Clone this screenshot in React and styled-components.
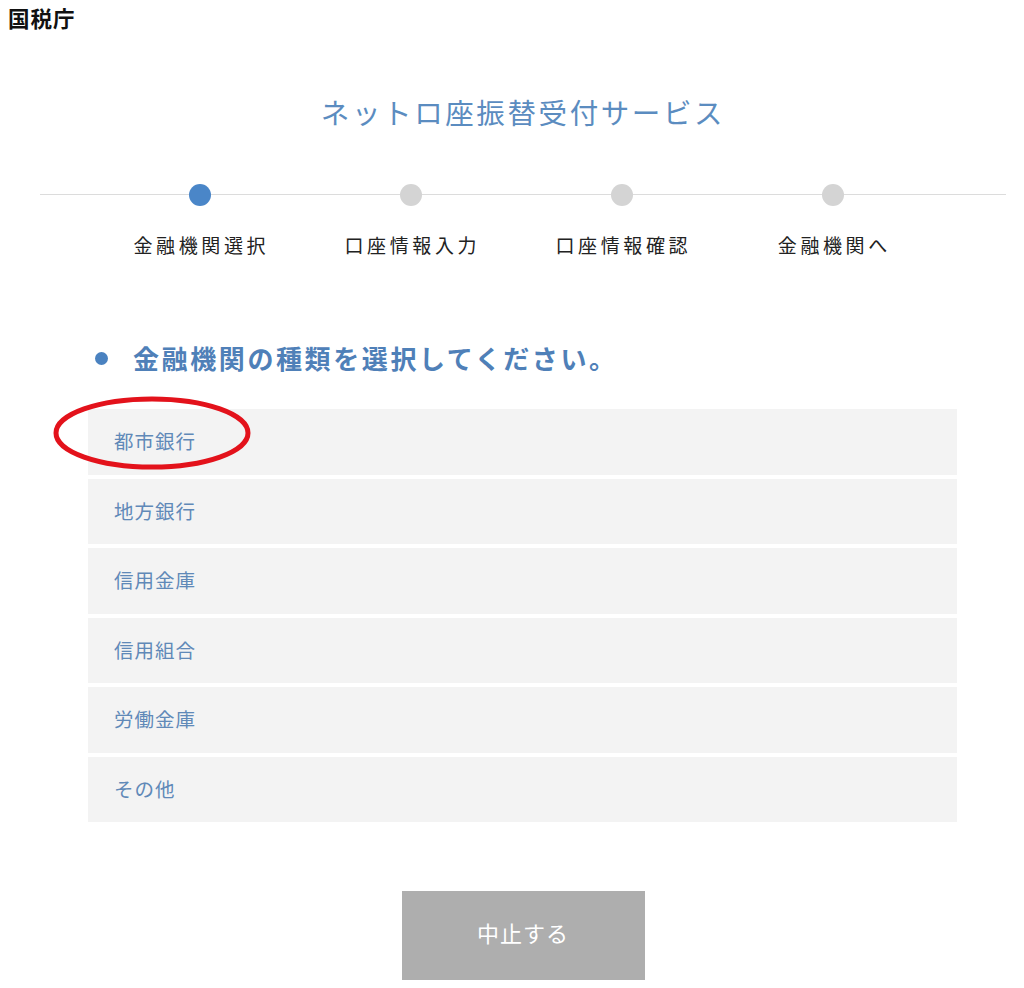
import React from "react";
import styled, { createGlobalStyle } from "styled-components";

const Global = createGlobalStyle`
  html, body { margin: 0; padding: 0; background: #fff; }
  body { font-family: "Noto Sans CJK JP", "Noto Sans", sans-serif; }
`;

const Header = styled.header`
  padding: 5px 8px;
  font-size: 21.5px;
  line-height: 26px;
  font-weight: 700;
  color: #111;
  letter-spacing: 1px;
`;

const Main = styled.main`
  width: 966px;
  margin-left: 40px;
  display: flex;
  flex-direction: column;
`;

const Title = styled.h1`
  margin: 56px 0 0;
  text-align: center;
  font-size: 28.5px;
  line-height: 40px;
  font-weight: 400;
  letter-spacing: 2.6px;
  color: #5b8cc0;
`;

const Stepper = styled.ol`
  list-style: none;
  margin: 52px 0 0;
  padding: 0 0 0 54px;
  display: grid;
  grid-template-columns: repeat(4, 211px);
  position: relative;
  &::before {
    content: "";
    position: absolute;
    left: 0;
    right: 0;
    top: 10px;
    height: 1px;
    background: #dcdcdc;
  }
`;

const Step = styled.li`
  display: flex;
  flex-direction: column;
  align-items: center;
  position: relative;
`;

const Dot = styled.span`
  width: 22px;
  height: 22px;
  border-radius: 50%;
  background: ${(p) => (p.$active ? "#4a86c8" : "#d4d4d4")};
`;

const StepLabel = styled.span`
  margin-top: 27px;
  font-size: 19px;
  line-height: 24px;
  letter-spacing: 3.6px;
  margin-right: -3.6px;
  color: #222;
`;

const Heading = styled.h2`
  margin: 83px 0 0;
  padding-left: 55px;
  display: flex;
  align-items: center;
  gap: 25px;
  font-size: 26px;
  line-height: 36px;
  font-weight: 700;
  letter-spacing: 2.6px;
  color: #4f80b8;
`;

const Bullet = styled.span`
  width: 13px;
  height: 13px;
  border-radius: 50%;
  background: #4a82c0;
  flex: none;
`;

const List = styled.ul`
  list-style: none;
  margin: 33px 0 0 48px;
  padding: 0;
  width: 869px;
  display: flex;
  flex-direction: column;
  gap: 4px;
  position: relative;
`;

const Row = styled.li`
  height: 65.5px;
  background: #f3f3f3;
  display: flex;
  align-items: center;
  padding-left: 26px;
  padding-bottom: 2px;
  box-sizing: border-box;
  font-size: 19.5px;
  letter-spacing: 1px;
  color: #6089b8;
`;

const Annotation = styled.svg`
  position: absolute;
  left: -36px;
  top: -13px;
  overflow: visible;
  pointer-events: none;
`;

const Cancel = styled.button`
  align-self: center;
  margin: 69px 0 0;
  width: 243px;
  height: 89px;
  padding: 0 0 8px;
  border: none;
  background: #aeaeae;
  color: #fff;
  font-family: inherit;
  font-size: 22px;
  letter-spacing: 1px;
  cursor: pointer;
`;

const steps = ["金融機関選択", "口座情報入力", "口座情報確認", "金融機関へ"];
const types = ["都市銀行", "地方銀行", "信用金庫", "信用組合", "労働金庫", "その他"];

export default function App() {
  return (
    <>
      <Global />
      <Header>国税庁</Header>
      <Main>
        <Title>ネットロ座振替受付サービス</Title>
        <Stepper>
          {steps.map((s, i) => (
            <Step key={s}>
              <Dot $active={i === 0} />
              <StepLabel>{s}</StepLabel>
            </Step>
          ))}
        </Stepper>
        <Heading>
          <Bullet />
          金融機関の種類を選択してください。
        </Heading>
        <List>
          {types.map((t) => (
            <Row key={t}>{t}</Row>
          ))}
          <Annotation width="200" height="76" viewBox="0 0 200 76">
            <ellipse cx="100" cy="37" rx="96" ry="34" fill="none" stroke="#e3121b" strokeWidth="5" />
          </Annotation>
        </List>
        <Cancel type="button">中止する</Cancel>
      </Main>
    </>
  );
}
